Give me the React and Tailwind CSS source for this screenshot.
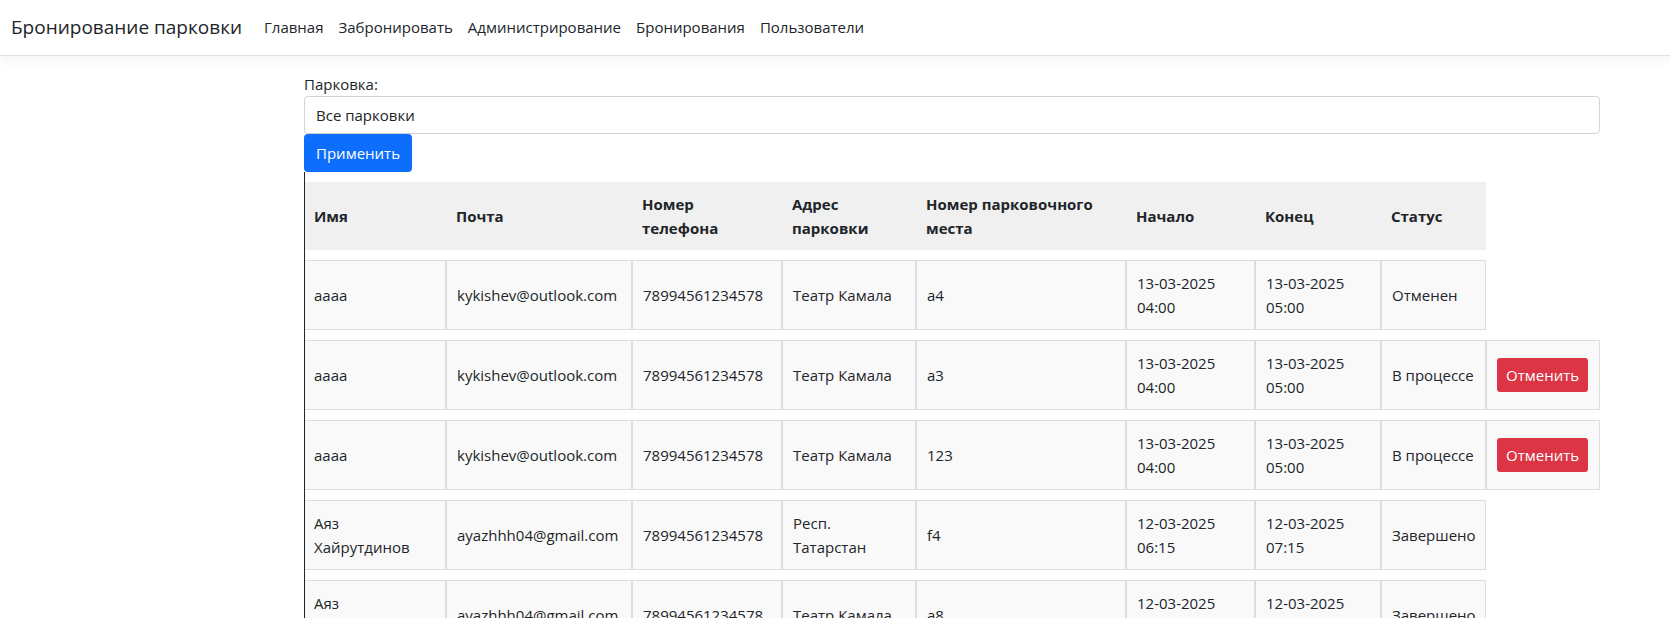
const links = ['Главная', 'Забронировать', 'Администрирование', 'Бронирования', 'Пользователи'];

const columns = [
  { title: 'Имя', width: 'w-[141px]' },
  { title: 'Почта', width: 'w-[186px]' },
  { title: 'Номер\nтелефона', width: 'w-[150px]' },
  { title: 'Адрес\nпарковки', width: 'w-[134px]' },
  { title: 'Номер парковочного\nместа', width: 'w-[210px]' },
  { title: 'Начало', width: 'w-[129px]' },
  { title: 'Конец', width: 'w-[126px]' },
  { title: 'Статус', width: 'w-[105px]' },
];

const bookings = [
  { id: 1, cancellable: false, cells: ['aaaa', 'kykishev@outlook.com', '78994561234578', 'Театр Камала', 'a4', '13-03-2025\n04:00', '13-03-2025\n05:00', 'Отменен'] },
  { id: 2, cancellable: true, cells: ['aaaa', 'kykishev@outlook.com', '78994561234578', 'Театр Камала', 'a3', '13-03-2025\n04:00', '13-03-2025\n05:00', 'В процессе'] },
  { id: 3, cancellable: true, cells: ['aaaa', 'kykishev@outlook.com', '78994561234578', 'Театр Камала', '123', '13-03-2025\n04:00', '13-03-2025\n05:00', 'В процессе'] },
  { id: 4, cancellable: false, cells: ['Аяз\nХайрутдинов', 'ayazhhh04@gmail.com', '78994561234578', 'Респ.\nТатарстан', 'f4', '12-03-2025\n06:15', '12-03-2025\n07:15', 'Завершено'] },
  { id: 5, cancellable: false, cells: ['Аяз\nХайрутдинов', 'ayazhhh04@gmail.com', '78994561234578', 'Театр Камала', 'a8', '12-03-2025\n06:15', '12-03-2025\n07:15', 'Завершено'] },
];

function Navbar() {
  return (
    <header className="flex h-14 items-center border-b border-[#dee2e6] bg-white px-[11px] pb-[2px] shadow-[0_4px_12px_rgba(0,0,0,0.05)]">
      <a href="#" className="mr-[22px] whitespace-nowrap text-[19px] leading-[30px]">Бронирование парковки</a>
      <nav className="flex gap-[15px]">
        {links.map((link) => (
          <a key={link} href="#" className="py-2">{link}</a>
        ))}
      </nav>
    </header>
  );
}

function Filter() {
  return (
    <form onSubmit={(event) => event.preventDefault()}>
      <label htmlFor="parking" className="block">Парковка:</label>
      <select id="parking" className="block h-[38px] w-full appearance-none rounded border border-[#ced4da] bg-white px-[11px]">
        <option>Все парковки</option>
      </select>
      <button type="submit" className="block h-[38px] rounded bg-[#0d6efd] px-3 text-white">Применить</button>
    </form>
  );
}

function BookingsTable() {
  return (
    <div className="border-l border-[#212529]">
      <table className="w-full table-fixed border-separate border-spacing-x-0 border-spacing-y-[10px]">
        <colgroup>
          {columns.map((column) => (
            <col key={column.title} className={column.width} />
          ))}
          <col className="w-[114px]" />
        </colgroup>
        <thead>
          <tr>
            {columns.map((column) => (
              <th key={column.title} scope="col" className="whitespace-pre-line bg-[#f0f0f0] p-[10px] text-left font-bold first:pl-[9px]">
                {column.title}
              </th>
            ))}
          </tr>
        </thead>
        <tbody>
          {bookings.map((booking) => (
            <tr key={booking.id}>
              {booking.cells.map((cell, index) => (
                <td key={index} className="h-[70px] whitespace-pre-line border border-[#dddddd] bg-[#f9f9f9] p-[10px] first:border-l-0 first:pl-[9px]">
                  {cell}
                </td>
              ))}
              {booking.cancellable && (
                <td className="border border-[#dddddd] bg-[#f9f9f9] p-[10px]">
                  <button type="button" className="block whitespace-nowrap rounded-[3px] bg-[#dc3545] px-[9px] py-[5px] text-white">Отменить</button>
                </td>
              )}
            </tr>
          ))}
        </tbody>
      </table>
    </div>
  );
}

export default function App() {
  return (
    <div className="bg-white font-['Open_Sans','Noto_Sans',sans-serif] text-[15px] leading-6 text-[#212529]">
      <Navbar />
      <main className="ml-[304px] mr-[70px] pt-4">
        <Filter />
        <BookingsTable />
      </main>
    </div>
  );
}
